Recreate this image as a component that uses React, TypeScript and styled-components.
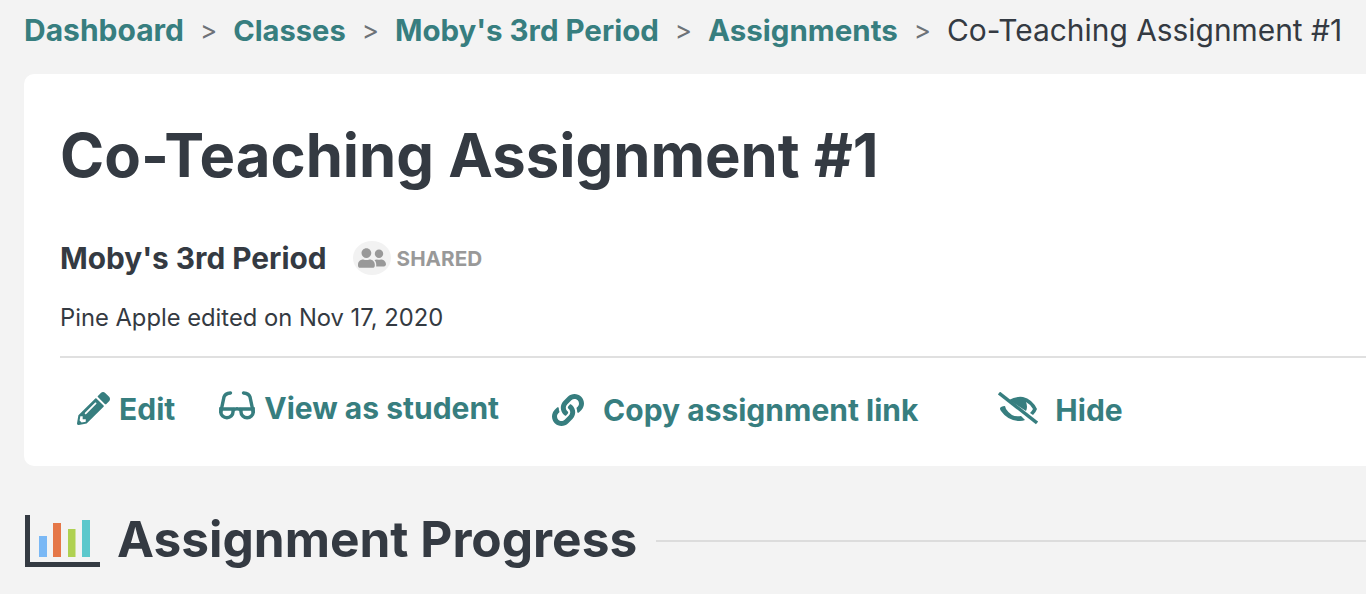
import React from 'react';
import styled, { createGlobalStyle } from 'styled-components';
import { FaLink, FaPencilAlt, FaUserFriends } from 'react-icons/fa';

const GlobalStyle = createGlobalStyle`
  html, body {
    margin: 0;
    height: 100%;
    overflow: hidden;
    background: #f3f3f3;
    font-family: 'Inter', 'Liberation Sans', sans-serif;
    color: #343a42;
  }
`;

const Page = styled.div`
  height: 594px;
  padding-left: 24px;
  overflow: hidden;
`;

const Breadcrumbs = styled.nav`
  height: 60px;
  display: flex;
  align-items: center;
  white-space: nowrap;
`;

const Crumb = styled.a<{ $size?: number }>`
  color: #377e7f;
  font-weight: 700;
  font-size: ${(p) => p.$size ?? 29.5}px;
`;

const Separator = styled.span`
  color: #6d7278;
  font-size: 26px;
  margin: 0 16px;
`;

const Current = styled.span`
  font-size: 29.9px;
`;

const Card = styled.section`
  margin-top: 14px;
  width: 1400px;
  height: 392px;
  box-sizing: border-box;
  padding: 44px 0 0 36px;
  background: #fff;
  border-radius: 10px;
`;

const Title = styled.h1`
  margin: 0;
  font-size: 59.8px;
  line-height: 74px;
  font-weight: 700;
`;

const ClassRow = styled.div`
  margin-top: 48px;
  height: 36px;
  display: flex;
  align-items: center;
`;

const ClassName = styled.span`
  font-size: 29.8px;
  font-weight: 700;
`;

const SharedIcon = styled.span`
  margin-left: 26px;
  width: 38px;
  height: 34px;
  border-radius: 50%;
  background: #f2f2f2;
  color: #999;
  display: flex;
  align-items: center;
  justify-content: center;
  font-size: 28px;
`;

const SharedLabel = styled.span`
  margin-left: 6px;
  font-size: 20.7px;
  font-weight: 700;
  color: #999;
`;

const EditedLine = styled.p`
  margin: 27px 0 0;
  font-size: 23.75px;
  line-height: 30px;
`;

const Actions = styled.div`
  margin-top: 23px;
  border-top: 2px solid #e0e0e0;
  padding: 34px 0 0 17px;
  display: flex;
  align-items: center;
`;

const Action = styled.a<{ $gap: number; $after: number; $drop?: number }>`
  display: flex;
  align-items: center;
  gap: ${(p) => p.$gap}px;
  margin-right: ${(p) => p.$after}px;
  margin-top: ${(p) => p.$drop ?? 0}px;
  color: #377e7f;
  font-size: 30px;
  font-weight: 700;
  white-space: nowrap;
  svg {
    flex: none;
  }
`;

const SectionHeader = styled.div`
  margin-top: 47px;
  display: flex;
  align-items: flex-start;
`;

const ChartSvg = styled.svg`
  flex: none;
  margin: 2px 0 0 1px;
`;

const SectionTitle = styled.h2`
  margin: 0 0 0 17px;
  font-size: 49.6px;
  line-height: 52px;
  font-weight: 700;
  white-space: nowrap;
`;

const Rule = styled.div`
  margin: 27px 0 0 19px;
  flex: 1;
  height: 2px;
  background: #dcdcdc;
`;

function GlassesIcon() {
  return (
    <svg width="36" height="34" viewBox="0 0 36 34" fill="none" stroke="#377e7f" strokeWidth="3.4">
      <path d="M1.8 21 L5 6 Q6 2.5 11.5 2" strokeLinecap="round" />
      <path d="M34.2 21 L31 6 Q30 2.5 24.5 2" strokeLinecap="round" />
      <path d="M1.8 18 H14 V21 A6.1 5.8 0 0 1 1.8 21 Z" />
      <path d="M22 18 H34.2 V21 A6.1 5.8 0 0 1 22 21 Z" />
      <path d="M14 19 Q18 16.5 22 19" />
    </svg>
  );
}

function HiddenEyeIcon() {
  return (
    <svg width="40" height="36" viewBox="0 0 40 36">
      <path
        d="M11 8 Q18 4 25 5 Q34 7 39 17 Q38 20 35 23 L32 21 Q34 19 35 17 Q32 12 28 10 Q30 15 28 19 Z"
        fill="#377e7f"
      />
      <path
        d="M3 15 Q1 16 3 19 Q10 29 22 29 Q25 29 27 28 L23 24 Q14 26 8 17 L7 14 Q5 14 3 15 Z"
        fill="#377e7f"
      />
      <path d="M1 1 L39 31" stroke="#377e7f" strokeWidth="3.4" />
    </svg>
  );
}

function ProgressIcon() {
  return (
    <ChartSvg width="75" height="52" viewBox="0 0 75 52">
      <rect x="0" y="0" width="5" height="52" fill="#343a42" />
      <rect x="0" y="47" width="75" height="5" fill="#343a42" />
      <rect x="14" y="21" width="8" height="21" fill="#7ab8f5" />
      <rect x="28" y="8" width="8" height="34" fill="#e57748" />
      <rect x="43" y="14" width="7.5" height="28" fill="#afd152" />
      <rect x="57" y="5" width="8" height="37" fill="#5cc8cc" />
    </ChartSvg>
  );
}

export default function App() {
  return (
    <Page>
      <GlobalStyle />
      <Breadcrumbs>
        <Crumb $size={30}>Dashboard</Crumb>
        <Separator>&gt;</Separator>
        <Crumb $size={29.1}>Classes</Crumb>
        <Separator>&gt;</Separator>
        <Crumb>Moby's 3rd Period</Crumb>
        <Separator>&gt;</Separator>
        <Crumb>Assignments</Crumb>
        <Separator>&gt;</Separator>
        <Current>Co-Teaching Assignment #1</Current>
      </Breadcrumbs>
      <Card>
        <Title>Co-Teaching Assignment #1</Title>
        <ClassRow>
          <ClassName>Moby's 3rd Period</ClassName>
          <SharedIcon>
            <FaUserFriends />
          </SharedIcon>
          <SharedLabel>SHARED</SharedLabel>
        </ClassRow>
        <EditedLine>Pine Apple edited on Nov 17, 2020</EditedLine>
        <Actions>
          <Action $gap={9} $after={44} $drop={-3}>
            <FaPencilAlt size={33} />
            Edit
          </Action>
          <Action $gap={9} $after={53} $drop={-4}>
            <GlassesIcon />
            View as student
          </Action>
          <Action $gap={19} $after={80}>
            <FaLink size={32} />
            Copy assignment link
          </Action>
          <Action $gap={17} $after={0}>
            <HiddenEyeIcon />
            Hide
          </Action>
        </Actions>
      </Card>
      <SectionHeader>
        <ProgressIcon />
        <SectionTitle>Assignment Progress</SectionTitle>
        <Rule />
      </SectionHeader>
    </Page>
  );
}
